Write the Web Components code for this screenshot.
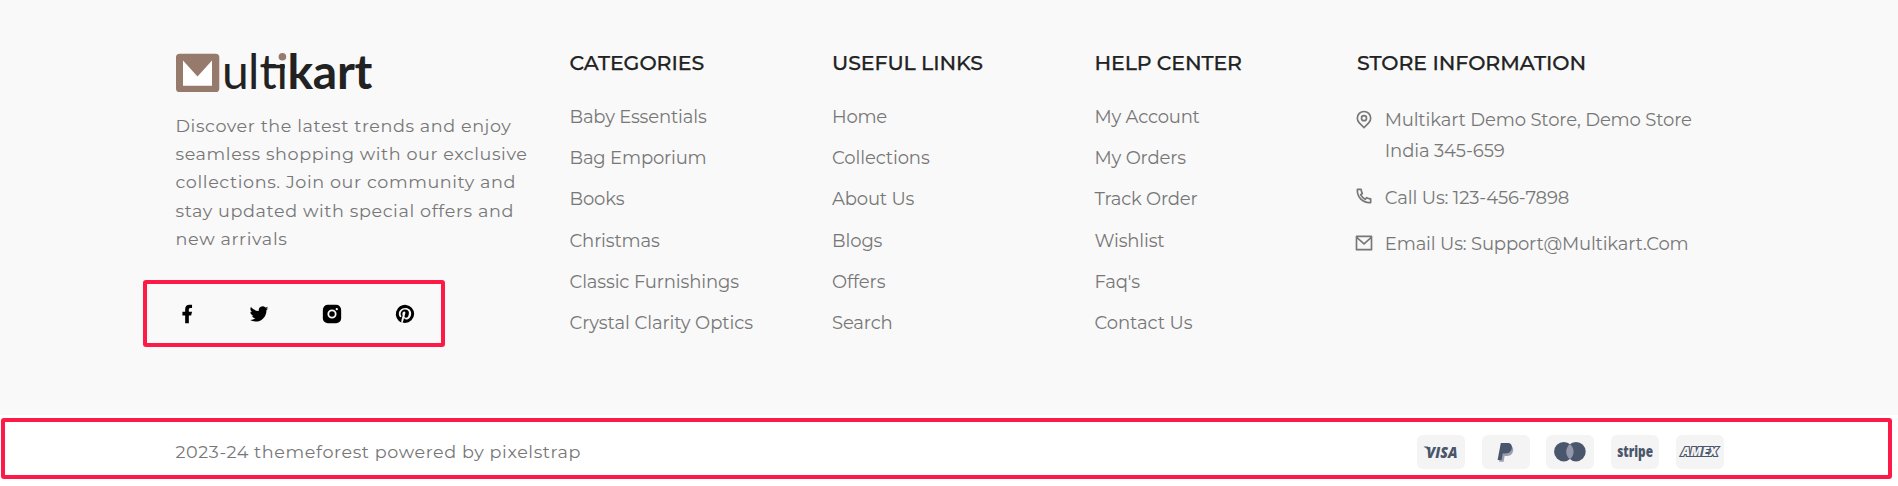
<!DOCTYPE html>
<html lang="en"><head><meta charset="utf-8"><title>Multikart footer</title>
<style>
body{margin:0;background:#fff;font-family:Montserrat,Inter,"Open Sans",sans-serif;color:#777;overflow:hidden}
</style></head><body>
<site-footer></site-footer>
<script>
const define=(name,html,init)=>customElements.define(name,class extends HTMLElement{
  connectedCallback(){
    if(this.shadowRoot)return;
    this.attachShadow({mode:'open'}).innerHTML=html;
    if(init)init.call(this,this.shadowRoot);
  }
});

/* One line of text, tracked so that it spans the given measure. */
define('fit-line',`<style>:host{display:block;white-space:nowrap}span{display:inline-block;font-kerning:normal}</style><span><slot></slot></span>`,function(r){
  const s=r.querySelector('span'),w=+this.getAttribute('w'),n=this.textContent.length;
  s.style.letterSpacing=(w-s.getBoundingClientRect().width)/n+'px';
});

define('brand-logo',`<style>:host{display:block;width:200px;height:42px}svg{display:block;overflow:visible}text{font-family:Lato,sans-serif;fill:#222}</style>
<svg width="200" height="42" viewBox="175 52 200 42">
<rect x="176" y="53.7" width="43.3" height="38.3" rx="3.6" fill="#967a6c"/>
<path d="M183 60.5 197.5 76.5 212 60.5V85.7H183Z" fill="#fff"/>
<text y="88.7" font-size="48" x="222 248 259.500 276.500">ulti</text>
<rect x="264" y="64.8" width="20.800" height="3.500" fill="#222"/>
<circle cx="282.400" cy="56.700" r="5" fill="#f9f9f9"/><circle cx="282.400" cy="56.700" r="3.800" fill="#967a6c"/>
<text y="88.7" x="287.400" font-size="48" font-weight="700" textLength="85" lengthAdjust="spacing">kart</text>
</svg>`);

const glyphs={
facebook:'M14 13.5h2.5l1-4H14v-2c0-1.03 0-2 2-2h1.5V2.14c-.326-.043-1.557-.14-2.857-.14C11.928 2 10 3.657 10 6.7v2.8H7v4h3V22h4v-8.500z',
twitter:'M22.162 5.656a8.384 8.384 0 0 1-2.402.658A4.196 4.196 0 0 0 21.6 4c-.82.488-1.719.83-2.656 1.015a4.182 4.182 0 0 0-7.126 3.814 11.874 11.874 0 0 1-8.62-4.37 4.168 4.168 0 0 0-.566 2.103c0 1.45.738 2.731 1.86 3.481a4.168 4.168 0 0 1-1.894-.523v.052a4.185 4.185 0 0 0 3.355 4.101 4.21 4.21 0 0 1-1.89.072A4.185 4.185 0 0 0 7.97 16.65a8.394 8.394 0 0 1-6.191 1.732 11.83 11.83 0 0 0 6.41 1.88c7.693 0 11.9-6.373 11.9-11.9 0-.18-.005-.362-.013-.54a8.496 8.496 0 0 0 2.087-2.165z',
instagram:'M7.500 2h9A5.500 5.500 0 0 1 22 7.500v9a5.500 5.500 0 0 1-5.500 5.500h-9A5.500 5.500 0 0 1 2 16.500v-9A5.500 5.500 0 0 1 7.500 2zM12 7a5 5 0 1 0 0 10 5 5 0 0 0 0-10zm0 2a3 3 0 1 1 0 6 3 3 0 0 1 0-6zm5.250-3.500a1.250 1.250 0 1 0 0 2.500 1.250 1.250 0 0 0 0-2.500z',
pinterest:'M13.37 2.094A10.003 10.003 0 0 0 8.002 21.17a7.757 7.757 0 0 1 .163-2.293c.185-.839 1.296-5.463 1.296-5.463a3.739 3.739 0 0 1-.324-1.577c0-1.485.857-2.593 1.923-2.593a1.334 1.334 0 0 1 1.342 1.508c0 .9-.578 2.262-.88 3.54a1.544 1.544 0 0 0 1.575 1.923c1.898 0 3.17-2.431 3.17-5.301 0-2.2-1.457-3.848-4.143-3.848a4.746 4.746 0 0 0-4.93 4.794 2.96 2.96 0 0 0 .648 1.97.48.48 0 0 1 .162.554c-.046.184-.162.623-.208.784a.354.354 0 0 1-.51.254c-1.384-.554-2.036-2.077-2.036-3.816 0-2.847 2.384-6.255 7.154-6.255 3.796 0 6.32 2.777 6.32 5.747 0 3.909-2.177 6.848-5.394 6.848a2.861 2.861 0 0 1-2.454-1.246s-.578 2.316-.692 2.754a8.026 8.026 0 0 1-.843 1.775 10 10 0 0 0 2.709.471A10 10 0 0 0 22 12 10 10 0 0 0 13.37 2.094z',
pin:'M12 23.728l-6.364-6.364a9 9 0 1 1 12.728 0L12 23.728zm4.95-7.778a7 7 0 1 0-9.9 0L12 20.9l4.95-4.95zM12 15a4 4 0 1 1 0-8 4 4 0 0 1 0 8zm0-2a2 2 0 1 0 0-4 2 2 0 0 0 0 4z',
phone:'M9.366 10.682a10.556 10.556 0 0 0 3.952 3.952l.884-1.238a1 1 0 0 1 1.294-.296 11.422 11.422 0 0 0 4.583 1.364 1 1 0 0 1 .921.997v4.462a1 1 0 0 1-.898.995c-.53.055-1.064.082-1.602.082C9.94 21 3 14.06 3 5.5c0-.538.027-1.072.082-1.602A1 1 0 0 1 4.077 3h4.462a1 1 0 0 1 .997.921A11.422 11.422 0 0 0 10.9 8.504a1 1 0 0 1-.296 1.294l-1.238.884zm-2.522-.657l1.9-1.357A13.41 13.41 0 0 1 7.647 5H5.01c-.006.166-.009.333-.009.5C5 12.956 11.044 19 18.5 19c.167 0 .334-.003.5-.01v-2.637a13.41 13.41 0 0 1-3.668-1.097l-1.357 1.9a12.442 12.442 0 0 1-1.588-.75l-.058-.033a12.556 12.556 0 0 1-4.702-4.702l-.033-.058a12.442 12.442 0 0 1-.75-1.588z',
mail:'M3 3h18a1 1 0 0 1 1 1v16a1 1 0 0 1-1 1H3a1 1 0 0 1-1-1V4a1 1 0 0 1 1-1zm17 4.238l-7.928 7.1L4 7.216V19h16V7.238zM4.511 5l7.55 6.662L19.502 5H4.511z'};
define('line-icon',`<style>:host{display:block;flex:none}svg{display:block;width:100%;height:100%}</style><svg viewBox="0 0 24 24"><path fill="currentColor" fill-rule="evenodd"/></svg>`,function(r){
  r.querySelector('path').setAttribute('d',glyphs[this.getAttribute('name')]);
});

define('social-links',`<style>:host{display:flex;box-sizing:border-box;width:302px;height:67px;border:4px solid #fd1a47;border-radius:3px;align-items:center;padding:1px 0 0 28.500px;gap:50.800px;color:#000}line-icon{width:22px;height:22px}</style>
<line-icon name="facebook"></line-icon><line-icon name="twitter"></line-icon><line-icon name="instagram"></line-icon><line-icon name="pinterest"></line-icon>`);

define('link-column',`<style>:host{display:block}h4{margin:0 0 22px;font-size:20.500px;line-height:24px;font-weight:500;color:#222;-webkit-text-stroke:.25px #222}::slotted(fit-line){font-size:18px;line-height:41.200px}</style><h4><slot name="title"></slot></h4><slot></slot>`,function(){
  const t=this.querySelector('[slot=title]');if(t)t.style.cssText='font-size:20.500px;line-height:24px;font-weight:500';
});

define('contact-row',`<style>:host{display:flex;gap:10.400px;margin:0 0 16px -2.600px}line-icon{width:20px;height:20px;margin-top:3.800px}div{font-size:18px;line-height:30.700px}</style><line-icon></line-icon><div><slot></slot></div>`,function(r){
  const i=r.querySelector('line-icon'),n=document.createElement('line-icon');n.setAttribute('name',this.getAttribute('icon'));i.replaceWith(n);
});

const marks={
visa:'<path d="M6.800 11.500h4l2 4.500-.8 1.500c-.8-2.800-2.500-4.500-5.200-5.400Z"/><text x="9.500" y="22.800" font-size="15.500" font-weight="800" font-style="italic" textLength="31" lengthAdjust="spacingAndGlyphs">VISA</text>',
paypal:'<path d="M19.500 11h8c3 0 4.300 2 3.600 5-.8 4-3.300 5-7 5h-1.500l-1 5.800h-4.600Z" fill="#9ca0b2"/><path d="M18.800 8h6.500c3.500 0 5.100 2 4.500 5.200-.8 4.200-3.600 5.300-7.200 5.300h-1.800l-1.200 6.500h-4Z"/>',
master:'<circle cx="17.800" cy="16.700" r="9.700"/><circle cx="30" cy="16.700" r="9.700"/><path d="M23.900 9.100a9.700 9.700 0 0 1 0 15.200 9.700 9.700 0 0 1 0-15.200Z" fill="#9297ab"/>',
stripe:'<text x="6.200" y="21.500" font-size="15.500" font-weight="800" textLength="35.800" lengthAdjust="spacingAndGlyphs">stripe</text>',
amex:'<text x="5.600" y="21.200" font-size="11.500" font-weight="800" font-style="italic" textLength="36" lengthAdjust="spacingAndGlyphs" stroke="#4a566b" stroke-width="2.200" paint-order="stroke" style="fill:#f4f4f4">AMEX</text>'};
define('pay-card',`<style>:host{display:block;width:48px;height:34px;border-radius:6px;background:#f4f4f4}svg{display:block;overflow:visible;fill:#4a566b;font-family:"Open Sans",sans-serif}</style><svg width="48" height="34" viewBox="0 0 48 34"></svg>`,function(r){
  r.querySelector('svg').innerHTML=marks[this.getAttribute('brand')];
});

const column=(title,tw,items)=>`<link-column><fit-line slot="title" w="${tw}">${title}</fit-line>${items.map(([t,w])=>`<fit-line w="${w}">${t}</fit-line>`).join('')}</link-column>`;

define('footer-bottom',`<style>:host{display:block;box-sizing:border-box;height:71px;padding:3px 6px 7px 1px;background:#fff}
.frame{display:flex;box-sizing:border-box;height:61px;border:4px solid #fd1a47;border-radius:3px;align-items:center;justify-content:space-between;padding:0 164px 0 170.500px}
fit-line{font-size:17.600px;line-height:30px;margin-top:6px}
.cards{display:flex;gap:16.800px;margin-top:6px}</style>
<div class="frame"><fit-line w="405.500">2023-24 themeforest powered by pixelstrap</fit-line>
<div class="cards"><pay-card brand="visa"></pay-card><pay-card brand="paypal"></pay-card><pay-card brand="master"></pay-card><pay-card brand="stripe"></pay-card><pay-card brand="amex"></pay-card></div></div>`);

define('site-footer',`<style>:host{display:block}
main{display:grid;box-sizing:border-box;height:415px;grid-template-columns:394px 262.500px 262.500px 262.500px 1fr;padding:51px 0 0 175.500px;background:#f9f9f9;align-items:start}
brand-logo{margin:1px 0 18px -.5px}
.about{font-size:17.600px;line-height:28.200px}
social-links{margin:27px 0 0 -32.500px}</style>
<main>
<section><brand-logo></brand-logo><div class="about"><fit-line w="336">Discover the latest trends and enjoy</fit-line><fit-line w="352">seamless shopping with our exclusive</fit-line><fit-line w="340.500">collections. Join our community and</fit-line><fit-line w="338.500">stay updated with special offers and</fit-line><fit-line w="112">new arrivals</fit-line></div><social-links></social-links></section>
${column('CATEGORIES',134.6,[['Baby Essentials',137],['Bag Emporium',137],['Books',54.8],['Christmas',90.2],['Classic Furnishings',169.3],['Crystal Clarity Optics',183.6]])}
${column('USEFUL LINKS',151,[['Home',55],['Collections',97.6],['About Us',82.2],['Blogs',50.3],['Offers',53.3],['Search',60.5]])}
${column('HELP CENTER',147.4,[['My Account',105.2],['My Orders',91.3],['Track Order',103],['Wishlist',70],['Faq\'s',45.3],['Contact Us',98]])}
<link-column><fit-line slot="title" w="229">STORE INFORMATION</fit-line><div style="height:8.200px"></div>
<contact-row icon="pin"><fit-line w="307">Multikart Demo Store, Demo Store</fit-line><fit-line w="119.800">India 345-659</fit-line></contact-row>
<contact-row icon="phone"><fit-line w="184.300">Call Us: 123-456-7898</fit-line></contact-row>
<contact-row icon="mail"><fit-line w="303.700">Email Us: Support@Multikart.Com</fit-line></contact-row></link-column>
</main><footer-bottom></footer-bottom>`);
</script></body></html>
